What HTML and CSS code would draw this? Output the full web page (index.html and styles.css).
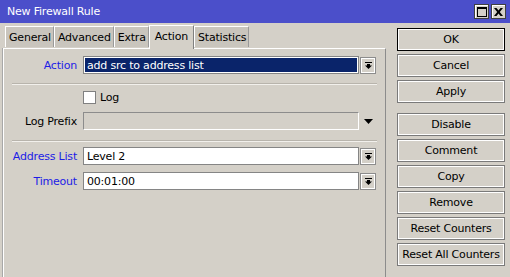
FILE: index.html
```html
<!DOCTYPE html>
<html>
<head>
<meta charset="utf-8">
<link rel="stylesheet" href="styles.css">
</head>
<body>
<div class="window">
  <div class="titlebar">
    <span class="title">New Firewall Rule</span>
    <div class="tb-btns">
      <span class="tb-btn"><svg width="10" height="10" viewBox="0 0 10 10"><rect x="0.5" y="0.5" width="9" height="9" fill="none" stroke="#000"/><rect x="0" y="0" width="10" height="2" fill="#000"/></svg></span>
      <span class="tb-btn"><svg width="9" height="8" viewBox="0 0 9 8"><path d="M0 0h2.5l2 2.5 2-2.5h2.5l-3.2 4 3.2 4h-2.5l-2-2.5-2 2.5h-2.5l3.2-4z" fill="#000"/></svg></span>
    </div>
  </div>
  <div class="main">
    <div class="left">
      <div class="tabs">
        <span class="tab">General</span>
        <span class="tab">Advanced</span>
        <span class="tab">Extra</span>
        <span class="tab active">Action</span>
        <span class="tab">Statistics</span>
      </div>
      <div class="panel">
        <div class="row row-action">
          <label class="lbl blue">Action</label>
          <div class="field sel">add src to address list</div>
          <span class="dd"><svg width="7" height="7" viewBox="0 0 7 7"><rect x="0" y="0" width="7" height="1" fill="#000"/><rect x="2" y="2" width="3" height="2" fill="#000"/><path d="M0 3.5h7l-3.5 3.5z" fill="#000"/></svg></span>
        </div>
        <div class="sep sep1"></div>
        <div class="row row-check">
          <span class="lbl"></span>
          <span class="check"></span><span class="check-text">Log</span>
        </div>
        <div class="row row-prefix">
          <label class="lbl">Log Prefix</label>
          <div class="field disabled"></div>
          <span class="dd-plain"><svg width="9" height="5" viewBox="0 0 9 5"><path d="M0 0h9l-4.5 5z" fill="#000"/></svg></span>
        </div>
        <div class="sep sep2"></div>
        <div class="row row-addr">
          <label class="lbl blue">Address List</label>
          <div class="field">Level 2</div>
          <span class="dd"><svg width="7" height="7" viewBox="0 0 7 7"><rect x="0" y="0" width="7" height="1" fill="#000"/><rect x="2" y="2" width="3" height="2" fill="#000"/><path d="M0 3.5h7l-3.5 3.5z" fill="#000"/></svg></span>
        </div>
        <div class="row row-timeout">
          <label class="lbl blue">Timeout</label>
          <div class="field">00:01:00</div>
          <span class="dd"><svg width="7" height="7" viewBox="0 0 7 7"><rect x="0" y="0" width="7" height="1" fill="#000"/><rect x="2" y="2" width="3" height="2" fill="#000"/><path d="M0 3.5h7l-3.5 3.5z" fill="#000"/></svg></span>
        </div>
      </div>
    </div>
    <div class="buttons">
      <div class="btn default">OK</div>
      <div class="btn">Cancel</div>
      <div class="btn">Apply</div>
      <div class="btn group">Disable</div>
      <div class="btn">Comment</div>
      <div class="btn">Copy</div>
      <div class="btn">Remove</div>
      <div class="btn">Reset Counters</div>
      <div class="btn">Reset All Counters</div>
    </div>
  </div>
</div>
</body>
</html>
```
FILE: styles.css
```css
* { box-sizing: border-box; }
html, body { margin: 0; padding: 0; }
body {
  width: 510px;
  height: 277px;
  overflow: hidden;
  background: #d4d0c8;
  font-family: "DejaVu Sans", Verdana, sans-serif;
  font-size: 11px;
  letter-spacing: -0.2px;
  color: #000;
}
.window { display: flex; flex-direction: column; height: 277px; }
.titlebar {
  height: 23px;
  background: #4b4fca;
  display: flex;
  align-items: center;
  padding: 0 4px 0 7px;
  color: #fff;
}
.title { flex: 1; font-size: 11px; }
.tb-btns { display: flex; gap: 2px; }
.tb-btn {
  width: 15px;
  height: 15px;
  background: #d4d0c8;
  border: 1px solid #404040;
  display: flex;
  align-items: center;
  justify-content: center;
  box-shadow: inset 1px 1px 0 #fff;
}
.main { flex: 1; display: flex; }
.left { width: 386px; display: flex; flex-direction: column; }
.tabs {
  display: flex;
  align-items: flex-end;
  padding: 1px 0 0 5px;
  height: 25px;
  position: relative;
  z-index: 1;
}
.tab {
  height: 21px;
  padding: 0 2px 0 3px;
  background: #c9c5bd;
  border-left: 1px solid #fff;
  border-top: 1px solid #fff;
  border-right: 1px solid #9a9a9a;
  display: flex;
  align-items: center;
  margin-bottom: 1px;
}
.tab.active {
  height: 24px;
  background: #d4d0c8;
  margin-bottom: -1px;
  padding: 0 5px 2px;
  border-right: 1px solid #808080;
}
.panel {
  flex: 1;
  margin-left: 3px;
  border-top: 1px solid #fff;
  border-left: 1px solid #fff;
  border-right: 1px solid #8c8c8c;
  box-shadow: -1px 0 0 #a8a8a8;
  padding-top: 7px;
}
.row { display: flex; align-items: center; }
.lbl {
  width: 79px;
  padding-right: 6px;
  text-align: right;
  flex: none;
}
.blue { color: #1c1ce6; }
.field {
  width: 276px;
  height: 18px;
  background: #fff;
  border: 1px solid #858585;
  padding-left: 3px;
  display: flex;
  align-items: center;
  white-space: nowrap;
}
.field.sel {
  background: #0a246a;
  color: #fff;
  box-shadow: inset 0 0 0 1px #fff;
}
.field.disabled {
  background: #d4d0c8;
  border-color: #8c8c8c #fff #fff #8c8c8c;
}
.dd {
  width: 16px;
  height: 17px;
  margin-left: 1px;
  border: 1px solid #8c8c8c;
  box-shadow: inset 1px 1px 0 #fff, inset -1px -1px 0 #fff;
  display: flex;
  align-items: center;
  justify-content: center;
}
.dd-plain {
  width: 16px;
  height: 17px;
  margin-left: 5px;
  display: flex;
  align-items: center;
}
.sep {
  margin-left: 8px;
  width: 365px;
  height: 2px;
  border-top: 1px solid #b8b4ac;
  border-bottom: 1px solid #f2f0ec;
}
.sep1 { margin-top: 9px; }
.row-check { margin-top: 6px; height: 13px; }
.check {
  width: 13px;
  height: 13px;
  background: #fff;
  border: 1px solid #808080;
}
.check-text { margin-left: 4px; }
.row-prefix { margin-top: 8px; }
.sep2 { margin-top: 10px; }
.row-addr { margin-top: 5px; }
.row-timeout { margin-top: 7px; }
.buttons {
  margin-left: 11px;
  width: 108px;
  padding-top: 5px;
  display: flex;
  flex-direction: column;
  gap: 3px;
}
.btn {
  height: 23px;
  border: 1px solid #7a7a7a;
  box-shadow: inset 0 0 0 1px #fff;
  display: flex;
  align-items: center;
  justify-content: center;
  white-space: nowrap;
}
.btn.default { border-color: #000; }
.btn.group { margin-top: 7px; }
```
